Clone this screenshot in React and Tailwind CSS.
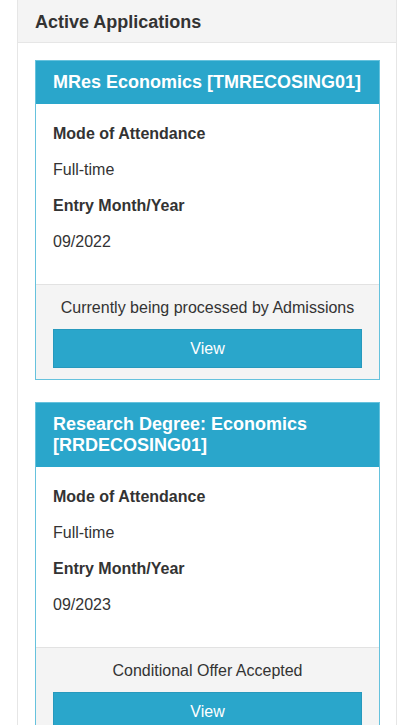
import React from "react";

const apps = [
  {
    title: "MRes Economics [TMRECOSING01]",
    mode: "Full-time",
    entry: "09/2022",
    status: "Currently being processed by Admissions",
  },
  {
    title: "Research Degree: Economics [RRDECOSING01]",
    mode: "Full-time",
    entry: "09/2023",
    status: "Conditional Offer Accepted",
  },
];

function Card({ app }) {
  return (
    <div className="border border-solid border-[#66c2dd] bg-white">
      <div className="bg-[#2aa6cb] px-[17px] pt-[11px] pb-[11px] text-[18px] font-bold leading-[21px] text-white">
        {app.title}
      </div>
      <div className="flex flex-col gap-[14px] px-[17px] pt-[19px] pb-[31px] text-[16px] leading-[22px] text-[#333]">
        <div className="font-bold">Mode of Attendance</div>
        <div>{app.mode}</div>
        <div className="font-bold">Entry Month/Year</div>
        <div>{app.entry}</div>
      </div>
      <div className="border-t border-[#e2e2e2] bg-[#f4f4f4] px-[17px] pt-[12px] pb-[11px]">
        <div className="text-center text-[16px] leading-[22px] text-[#333]">{app.status}</div>
        <button className="mt-[10px] flex h-[39px] w-full items-center justify-center border border-[#2799bd] bg-[#2aa6cb] text-[16px] text-white">
          View
        </button>
      </div>
    </div>
  );
}

export default function App() {
  return (
    <div className="h-[725px] overflow-hidden bg-white font-['Liberation_Sans',Arial,sans-serif]">
      <div className="ml-[17px] w-[380px] border-x border-[#e6e6e6] bg-white">
        <div className="flex h-[43px] items-center border-b border-[#e6e6e6] bg-[#f4f4f4] px-[17px] pt-[2px] text-[18px] font-bold text-[#333]">
          Active Applications
        </div>
        <div className="flex flex-col gap-[22px] pl-[17px] pr-[16px] pt-[17px] pb-[20px]">
          {apps.map((a, i) => (
            <Card key={i} app={a} />
          ))}
        </div>
      </div>
    </div>
  );
}
